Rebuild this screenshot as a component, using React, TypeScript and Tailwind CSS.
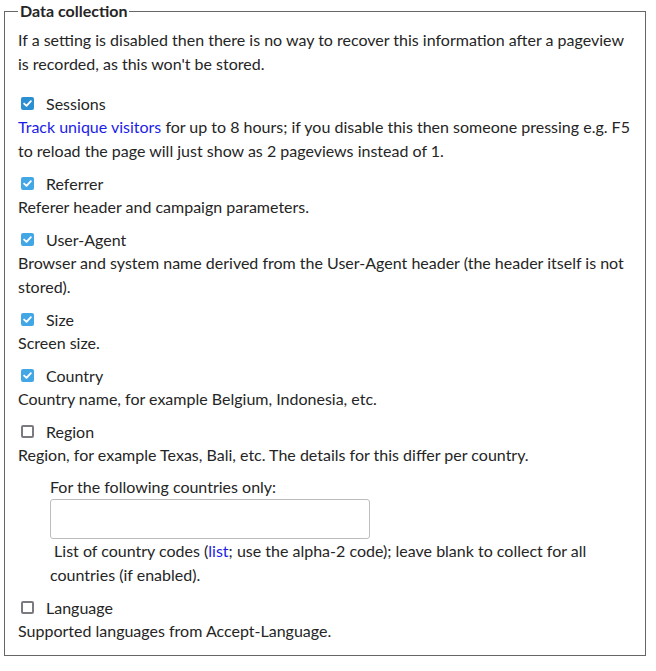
import React from 'react';

const font = { fontFamily: 'Lato, "Open Sans", sans-serif' };

function Check({ checked, dark }: { checked: boolean; dark?: boolean }) {
  if (!checked) {
    return (
      <span className="inline-block w-[13px] h-[13px] ml-[3px] mr-[12px] rounded-[2px] border-2 border-[#7a7a80] bg-white shrink-0" />
    );
  }
  return (
    <span
      className={`inline-flex items-center justify-center w-[13px] h-[13px] ml-[3px] mr-[12px] rounded-[2px] shrink-0 ${
        dark ? 'bg-[#2b8fd1]' : 'bg-[#43a7e6]'
      }`}
    >
      <svg viewBox="0 0 12 12" className="w-[11px] h-[11px]" fill="none">
        <path d="M2.3 6.1 L4.9 8.6 L9.7 3.5" stroke="white" strokeWidth="2" strokeLinecap="round" strokeLinejoin="round" />
      </svg>
    </span>
  );
}

function Option({
  label,
  checked,
  dark,
  children,
}: {
  label: string;
  checked: boolean;
  dark?: boolean;
  children: React.ReactNode;
}) {
  return (
    <div className="mt-[8px] first:mt-0">
      <label className="flex items-center h-[24px] pt-[1px]">
        <Check checked={checked} dark={dark} />
        <span>{label}</span>
      </label>
      <div>{children}</div>
    </div>
  );
}

export default function App() {
  return (
    <div className="bg-white text-[#252525] text-[16px] leading-[24px] pl-[4px]" style={font}>
      <fieldset className="w-[642px] border border-[#666] px-[13px] pt-[6px] pb-[12px]">
        <legend className="font-bold px-[2px] leading-[22px]">Data collection</legend>
        <p className="mb-[15px]">
          If a setting is disabled then there is no way to recover this information after a pageview is recorded, as
          this won't be stored.
        </p>

        <Option label="Sessions" checked dark>
          <a href="#" className="text-[#1c1ce8]">
            Track unique visitors
          </a>{' '}
          for up to 8 hours; if you disable this then someone pressing e.g. F5 to reload the page will just show as 2
          pageviews instead of 1.
        </Option>
        <Option label="Referrer" checked>
          Referer header and campaign parameters.
        </Option>
        <Option label="User-Agent" checked>
          Browser and system name derived from the User-Agent header (the header itself is not stored).
        </Option>
        <Option label="Size" checked>
          Screen size.
        </Option>
        <Option label="Country" checked>
          Country name, for example Belgium, Indonesia, etc.
        </Option>
        <Option label="Region" checked={false}>
          Region, for example Texas, Bali, etc. The details for this differ per country.
          <div className="mt-[8px] pl-[32px]">
            <div>For the following countries only:</div>
            <input
              type="text"
              className="block w-[320px] h-[40px] border border-[#bdbdbd] rounded-[3px] bg-white"
            />
            <div>
              {'\u00a0'}List of country codes (
              <a href="#" className="text-[#1c1ce8]">
                list
              </a>
              ; use the alpha-2 code); leave blank to collect for all countries (if enabled).
            </div>
          </div>
        </Option>
        <Option label="Language" checked={false}>
          Supported languages from Accept-Language.
        </Option>
      </fieldset>
    </div>
  );
}
